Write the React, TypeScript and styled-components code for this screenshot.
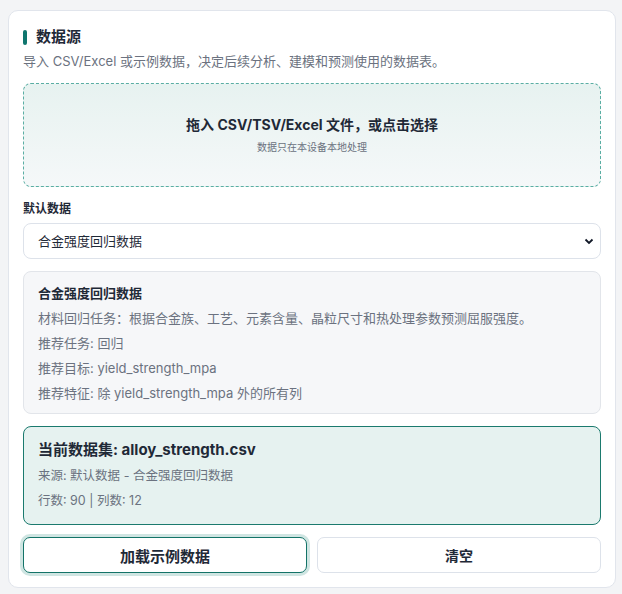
import styled, { createGlobalStyle } from 'styled-components'

const GlobalStyle = createGlobalStyle`
  html, body {
    margin: 0;
    background: #f3f4f6;
    font-family: Inter, "Noto Sans CJK SC", sans-serif;
    color: #1f2937;
  }
`

const Page = styled.div`
  padding: 10px 6px 8px 8px;
`

const Card = styled.section`
  background: #fff;
  border: 1px solid #e1e5ec;
  border-radius: 10px;
  padding: 15px 14px 14px 14px;
  display: flex;
  flex-direction: column;
`

const Heading = styled.h2`
  margin: 1px 0 0;
  display: flex;
  align-items: center;
  gap: 9px;
  font-size: 15px;
  font-weight: 700;
  line-height: 20px;
  color: #1f2937;

  &::before {
    content: '';
    width: 4px;
    height: 15px;
    border-radius: 2px;
    background: #0f766e;
  }
`

const Subtitle = styled.p`
  margin: 4px 0 0;
  font-size: 13px;
  line-height: 20px;
  color: #6b7280;
`

const DropZone = styled.div`
  margin-top: 12px;
  height: 104px;
  box-sizing: border-box;
  border: 1px dashed #5aaea3;
  border-radius: 8px;
  background: linear-gradient(180deg, #e7f2f0 0%, #f5f8f9 100%);
  display: flex;
  flex-direction: column;
  align-items: center;
  justify-content: center;
  gap: 6px;
`

const DropTitle = styled.div`
  font-size: 14px;
  font-weight: 700;
  color: #1f2937;
  line-height: 18px;
`

const DropHint = styled.div`
  font-size: 10px;
  color: #6b7280;
  line-height: 14px;
`

const Label = styled.label`
  margin-top: 14px;
  font-size: 12px;
  font-weight: 700;
  line-height: 16px;
  color: #1f2937;
`

const Select = styled.select`
  margin-top: 6px;
  height: 36px;
  width: 100%;
  box-sizing: border-box;
  appearance: none;
  border: 1px solid #dde2ea;
  border-radius: 8px;
  background: #fff
    url("data:image/svg+xml,%3Csvg xmlns='http://www.w3.org/2000/svg' width='10' height='8' viewBox='0 0 10 8'%3E%3Cpath d='M1.5 2.5 5 6l3.5-3.5' fill='none' stroke='%23111827' stroke-width='1.8'/%3E%3C/svg%3E")
    no-repeat right 6px center;
  padding: 0 14px;
  font-family: inherit;
  font-size: 13px;
  color: #1f2937;
`

const InfoBox = styled.div`
  margin-top: 12px;
  padding: 11px 14px 7px;
  background: #f6f7f9;
  border: 1px solid #e2e5ea;
  border-radius: 8px;
  display: flex;
  flex-direction: column;
`

const BoxTitle = styled.div<{ $size: number }>`
  font-size: ${p => p.$size}px;
  font-weight: 700;
  line-height: 20px;
  color: #1f2937;
  margin-bottom: 3px;
`

const Line = styled.div`
  font-size: 13px;
  line-height: 25px;
  color: #6b7280;
`

const CurrentBox = styled.div`
  margin-top: 12px;
  padding: 13px 14px 11px;
  background: #e6f2f0;
  border: 1px solid #1b7a6e;
  border-radius: 8px;
  display: flex;
  flex-direction: column;
`

const SmallLine = styled.div`
  font-size: 12.5px;
  line-height: 25px;
  color: #6b7280;
`

const Actions = styled.div`
  margin-top: 12px;
  display: grid;
  grid-template-columns: 1fr 1fr;
  gap: 10px;
`

const Button = styled.button<{ $primary?: boolean }>`
  height: 36px;
  border-radius: 7px;
  background: #fff;
  font-family: inherit;
  color: #1f2937;
  border: 1px solid ${p => (p.$primary ? '#137368' : '#dde2ea')};
  box-shadow: ${p => (p.$primary ? '0 0 0 3px #cfe5e2' : 'none')};
  font-size: ${p => (p.$primary ? '15px' : '14px')};
  font-weight: ${p => (p.$primary ? 700 : 600)};
`

export default function App() {
  return (
    <Page>
      <GlobalStyle />
      <Card>
        <Heading>数据源</Heading>
        <Subtitle>导入 CSV/Excel 或示例数据，决定后续分析、建模和预测使用的数据表。</Subtitle>
        <DropZone>
          <DropTitle>拖入 CSV/TSV/Excel 文件，或点击选择</DropTitle>
          <DropHint>数据只在本设备本地处理</DropHint>
        </DropZone>
        <Label>默认数据</Label>
        <Select defaultValue='alloy'>
          <option value='alloy'>合金强度回归数据</option>
        </Select>
        <InfoBox>
          <BoxTitle $size={13}>合金强度回归数据</BoxTitle>
          <Line>材料回归任务：根据合金族、工艺、元素含量、晶粒尺寸和热处理参数预测屈服强度。</Line>
          <Line>推荐任务: 回归</Line>
          <Line>推荐目标: yield_strength_mpa</Line>
          <Line>推荐特征: 除 yield_strength_mpa 外的所有列</Line>
        </InfoBox>
        <CurrentBox>
          <BoxTitle $size={15}>当前数据集: alloy_strength.csv</BoxTitle>
          <SmallLine>来源: 默认数据 - 合金强度回归数据</SmallLine>
          <SmallLine>行数: 90 | 列数: 12</SmallLine>
        </CurrentBox>
        <Actions>
          <Button $primary>加载示例数据</Button>
          <Button>清空</Button>
        </Actions>
      </Card>
    </Page>
  )
}
